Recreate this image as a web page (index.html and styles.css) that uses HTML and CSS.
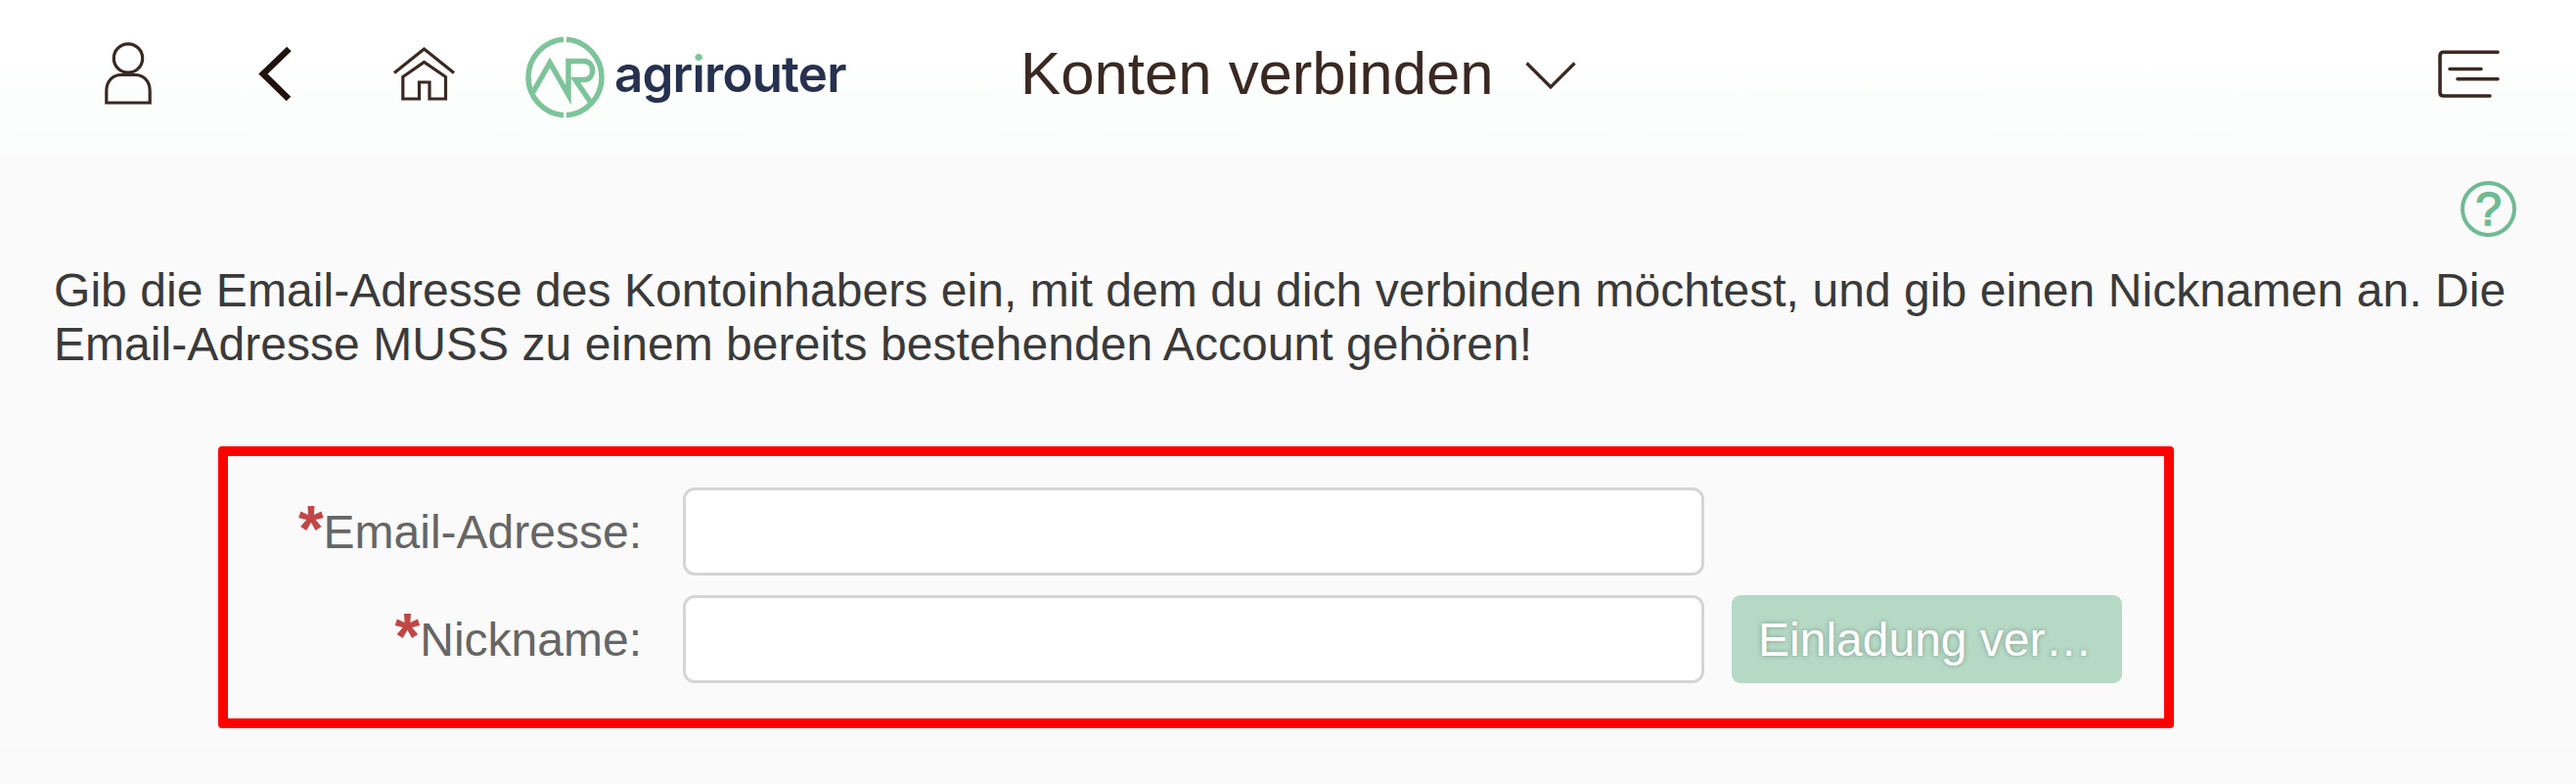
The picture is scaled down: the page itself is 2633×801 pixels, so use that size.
FILE: index.html
```html
<!DOCTYPE html>
<html lang="de">
<head>
<meta charset="utf-8">
<title>Konten verbinden</title>
<link rel="stylesheet" href="styles.css">
</head>
<body>
<header class="shell">
  <svg class="icon icon-user" viewBox="0 0 50 60" width="50" height="60"><circle cx="25" cy="16.500" r="14.7"/><path d="M2.8 62V50C2.8 40 9 33.500 18 33.500H32C41 33.500 47.2 40 47.2 50V62Z"/></svg>
  <svg class="icon icon-back" viewBox="0 0 34 60" width="34" height="60"><path d="M31.500 7L5 32.500L31 58"/></svg>
  <svg class="icon icon-home" viewBox="0 0 66 60" width="66" height="60"><path d="M2 31.500L32.500 7L63 31.500M10.800 35.500V58H27.500V41H38V58H54.500V35.500L32.500 20.500Z"/></svg>
  <div class="brand">
    <svg class="brand-mark" viewBox="0 0 84 84" width="84" height="84"><path d="M43 3.300A38.800 38.800 0 0 1 43 80.700M40 80.700A38.800 38.800 0 0 1 40 3.300"/><path d="M9 57L26 27L45 60V25.500H61C72.500 25.500 72.500 44.500 61 44.500H52L68 68"/></svg>
    <span class="brand-name">agr<span class="brand-i">i</span>router</span>
  </div>
  <h1 class="title">Konten verbinden</h1>
  <svg class="icon icon-chevron" viewBox="0 0 54 30" width="54" height="30"><path d="M2.500 2.500L27 27L51.500 2.500"/></svg>
  <svg class="icon icon-menu" viewBox="0 0 64 50" width="64" height="50"><path d="M61 3.300H5.500Q2 3.300 2 7V44.500Q2 48 5.500 48H53M12 20.500H44M20 30.700H61"/></svg>
</header>
<main class="page">
  <div class="help-row"><span class="help">?</span></div>
  <p class="intro">Gib die Email-Adresse des Kontoinhabers ein, mit dem du dich verbinden möchtest, und gib einen Nicknamen an. Die<br>Email-Adresse MUSS zu einem bereits bestehenden Account gehören!</p>
  <form class="form">
    <label class="label" for="email"><span class="star">*</span>Email-Adresse:</label>
    <input class="field" id="email" type="text">
    <span></span>
    <label class="label" for="nick"><span class="star">*</span>Nickname:</label>
    <input class="field" id="nick" type="text">
    <button class="send" type="button">Einladung ver…</button>
  </form>
</main>
</body>
</html>
```
FILE: styles.css
```css
* { box-sizing: border-box; }
body {
  margin: 0;
  height: 801px;
  overflow: hidden;
  background: linear-gradient(#fafafa 762px, #f9f9f9 762px);
  font-family: "Liberation Sans", Arial, sans-serif;
  font-size: 48px;
  color: #3a3a3a;
}
.shell {
  display: flex;
  align-items: flex-start;
  height: 157px;
  padding: 43px 77px 0 106px;
  background: linear-gradient(#fff 0%, #fefffe 35%, #fafdfb 100%);
}
.icon { flex: none; fill: none; stroke: #3a2822; stroke-width: 3.2; overflow: visible; }
.icon-back { margin-left: 108px; stroke: #20120d; stroke-width: 6.5; }
.icon-home { margin-left: 103px; }
.icon-chevron { margin: 19px 0 0 31px; }
.icon-menu { margin: 7px 0 0 auto; stroke-width: 3.6; stroke-linecap: round; }
.brand { display: flex; align-items: flex-start; margin: -6px 0 0 69px; }
.brand-mark { flex: none; fill: none; stroke: #7dc49b; stroke-width: 5.5; }
.brand-name {
  width: 246px;
  margin: 4px 0 0 8px;
  font: 600 51px/70px Inter, sans-serif;
  letter-spacing: -.8px;
  color: #26304f;
  white-space: nowrap;
}
.brand-i {
  background: linear-gradient(#7dc49b 22px, #26304f 22px);
  -webkit-background-clip: text;
  background-clip: text;
  color: transparent;
}
.title {
  margin: -4px 0 0 169px;
  font-size: 61.7px;
  font-weight: 400;
  line-height: 72px;
  color: #3a2822;
  white-space: nowrap;
}
.page { padding: 28px 56px 0; }
.help-row { display: flex; justify-content: flex-end; padding-right: 5px; }
.help {
  width: 57px;
  height: 57px;
  border: 4px solid #6fba92;
  border-radius: 50%;
  font-size: 48px;
  line-height: 49px;
  text-align: center;
  color: #6fba92;
  -webkit-text-stroke: 1.5px #6fba92;
}
.intro {
  margin: 27px 0 0 -1px;
  line-height: 55px;
  letter-spacing: .055px;
  white-space: nowrap;
}
.form {
  display: grid;
  grid-template-columns: 427px 1044px 399px;
  grid-template-rows: 90px 90px;
  column-gap: 28px;
  row-gap: 20px;
  width: 1999px;
  height: 288px;
  margin: 77px 0 0 167px;
  padding: 32px 10px;
  border: 10px solid #f00;
  border-radius: 4px;
}
.label {
  display: flex;
  justify-content: flex-end;
  padding-right: 14px;
  line-height: 91px;
  color: #666;
  white-space: nowrap;
}
.star {
  color: #c14646;
  font-size: 66px;
  font-weight: 700;
  line-height: 85px;
}
.field {
  width: 1044px;
  height: 90px;
  border: 3px solid #d5d5d5;
  border-radius: 12px;
  background: #fff;
}
.send {
  height: 90px;
  padding: 0 0 0 27px;
  border: 0;
  border-radius: 9px;
  background: #b5d9c5;
  color: #fff;
  font: inherit;
  text-align: left;
  text-shadow: 0 0 5px rgba(0, 0, 0, .3);
  white-space: nowrap;
}
```
